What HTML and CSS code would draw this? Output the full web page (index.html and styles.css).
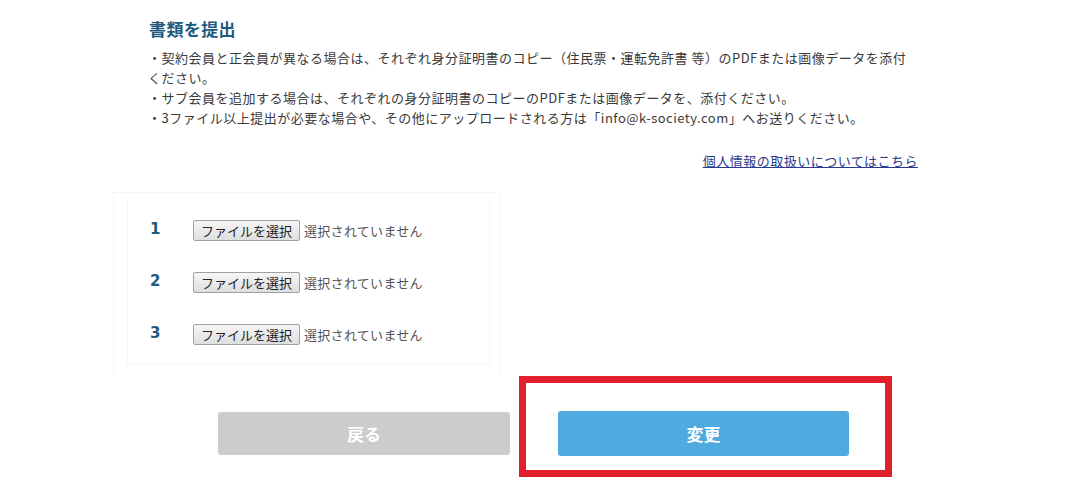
FILE: index.html
```html
<!DOCTYPE html>
<html lang="ja">
<head>
    <meta charset="UTF-8">
    <meta name="viewport" content="width=device-width, initial-scale=1.0">
    <title>書類を提出</title>
    <link rel="stylesheet" href="styles.css">
</head>
<body>
    <div class="page">
        <div class="intro">
            <h2 class="title">書類を提出</h2>
            <p>・契約会員と正会員が異なる場合は、それぞれ身分証明書のコピー（住民票・運転免許書 等）のPDFまたは画像データを添付ください。</p>
            <p>・サブ会員を追加する場合は、それぞれの身分証明書のコピーのPDFまたは画像データを、添付ください。</p>
            <p>・3ファイル以上提出が必要な場合や、その他にアップロードされる方は「info@k-society.com」へお送りください。</p>
            <div class="privacy">
                <a href="#">個人情報の取扱いについてはこちら</a>
            </div>
        </div>

        <div class="upload-outer">
            <div class="upload-inner">
                <div class="upload-row">
                    <span class="num">1</span>
                    <span class="file-btn">ファイルを選択</span>
                    <span class="file-status">選択されていません</span>
                </div>
                <div class="upload-row">
                    <span class="num">2</span>
                    <span class="file-btn">ファイルを選択</span>
                    <span class="file-status">選択されていません</span>
                </div>
                <div class="upload-row">
                    <span class="num">3</span>
                    <span class="file-btn">ファイルを選択</span>
                    <span class="file-status">選択されていません</span>
                </div>
            </div>
        </div>

        <div class="actions">
            <button class="btn btn-back">戻る</button>
            <div class="highlight">
                <button class="btn btn-submit">変更</button>
            </div>
        </div>
    </div>
</body>
</html>
```

FILE: styles.css
```css
body {
    margin: 0;
    background: #ffffff;
    font-family: "Noto Sans CJK JP", "Noto Sans", sans-serif;
    color: #3a3a3a;
}
.page {
    margin-left: 113px;
    width: 805px;
}
.intro {
    padding-left: 35px;
}
.title {
    margin: 19px 0 9px 1px;
    font-size: 17px;
    line-height: 20px;
    font-weight: bold;
    letter-spacing: 0.4px;
    color: #1d5a80;
}
.intro p {
    margin: 0;
    font-size: 13px;
    line-height: 20px;
    letter-spacing: 0.5px;
}
.privacy {
    margin-top: 23px;
    text-align: right;
    font-size: 13px;
    line-height: 20px;
    letter-spacing: 0.5px;
}
.privacy a {
    color: #2a3a8c;
    text-decoration: underline;
}
.upload-outer {
    margin-top: 21px;
    width: 363px;
    padding: 7px 10px 9px 13px;
    border: 1px solid #eef7f9;
    border-bottom-color: #ffffff;
}
.upload-inner {
    padding: 19px 0 19px 22px;
    border: 1px solid #f1f8fa;
    border-top-color: #ffffff;
}
.upload-row {
    display: flex;
    align-items: center;
    height: 21px;
    margin-bottom: 31px;
}
.upload-row:last-child {
    margin-bottom: 0;
}
.num {
    width: 43px;
    font-family: "DejaVu Sans", sans-serif;
    font-size: 15px;
    font-weight: bold;
    color: #1d5a80;
    position: relative;
    top: -2px;
}
.file-btn {
    box-sizing: border-box;
    width: 107px;
    height: 21px;
    line-height: 19px;
    text-align: center;
    font-size: 13px;
    color: #222;
    border: 1px solid #a0a0a0;
    border-radius: 2px;
    background: linear-gradient(#f6f6f6, #dedede);
}
.file-status {
    margin-left: 4px;
    font-size: 13px;
    letter-spacing: 0.3px;
    color: #555;
}
.actions {
    display: flex;
    align-items: flex-start;
    margin-top: 1px;
    margin-left: 105px;
    gap: 9px;
}
.btn {
    border: none;
    border-radius: 3px;
    color: #ffffff;
    font-family: "Noto Sans CJK JP", sans-serif;
    font-size: 17px;
    font-weight: bold;
}
.btn-back {
    margin-top: 36px;
    width: 292px;
    height: 43px;
    background: #cccccc;
}
.highlight {
    padding: 28px 36px 14px 32px;
    border: 7px solid #e1202b;
}
.btn-submit {
    display: block;
    width: 291px;
    height: 45px;
    background: #4eaadf;
}
```
